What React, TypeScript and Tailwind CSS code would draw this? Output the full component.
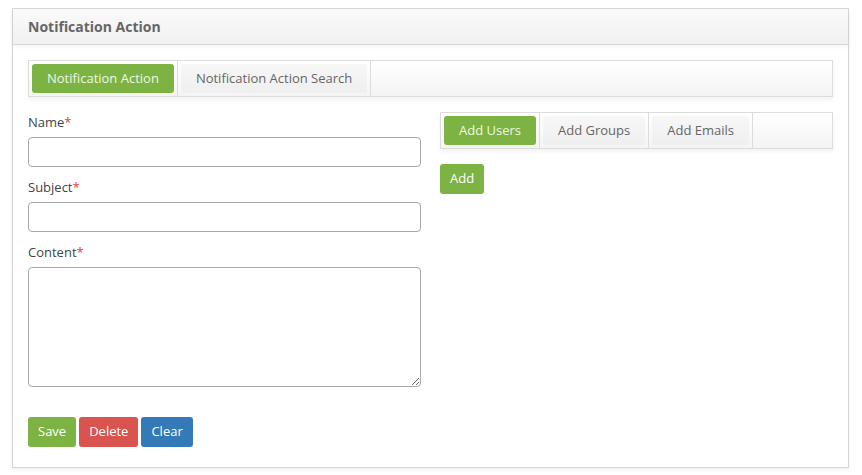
import { useState } from 'react'

const FONT = { fontFamily: '"Open Sans", "Noto Sans", sans-serif' }

function Tabs({ items, active, onPick }: { items: string[]; active: number; onPick: (i: number) => void }) {
  return (
    <div className="flex h-[37px] border border-[#dcdcdc] bg-gradient-to-b from-white to-[#f4f4f4] shadow-[0_3px_4px_rgba(0,0,0,0.05)]">
      {items.map((t, i) => (
        <div key={t} className="border-r border-[#dcdcdc] p-[3px]">
          <button
            onClick={() => onPick(i)}
            className={`h-[29px] rounded-[3px] px-[15px] text-[13px] leading-[29px] ${
              i === active
                ? 'bg-[#7cb342] text-[#eef7e6]'
                : 'bg-gradient-to-b from-[#f7f7f7] to-[#efefef] text-[#666]'
            }`}
          >
            {t}
          </button>
        </div>
      ))}
    </div>
  )
}

function Field({ label, area }: { label: string; area?: boolean }) {
  return (
    <div className="flex flex-col">
      <label className="h-[20px] text-[13px] leading-[20px] text-[#444]">
        {label}
        <span className="text-[#e53935]">*</span>
      </label>
      {area ? (
        <textarea className="mt-[5px] h-[120px] w-full rounded-[4px] border border-[#a3a8aa] bg-white" />
      ) : (
        <input className="mt-[5px] h-[30px] w-full rounded-[4px] border border-[#a3a8aa] bg-white" />
      )}
    </div>
  )
}

export default function App() {
  const [tab, setTab] = useState(0)
  const [sub, setSub] = useState(0)

  return (
    <div className="min-h-screen bg-white pl-[12px] pr-[13px] pt-[8px]" style={FONT}>
      <div className="border border-[#d6d6d6] bg-white shadow-[0_2px_4px_rgba(0,0,0,0.06)]">
        {/* header */}
        <div className="flex h-[36px] items-center border-b border-[#d6d6d6] bg-gradient-to-b from-[#fafafa] to-[#f1f1f1] px-[15px] shadow-[0_2px_4px_rgba(0,0,0,0.04)]">
          <h2 className="text-[14px] font-bold text-[#666]">Notification Action</h2>
        </div>

        <div className="px-[15px] pb-[20px] pt-[15px]">
          <Tabs items={['Notification Action', 'Notification Action Search']} active={tab} onPick={setTab} />

          <div className="mt-[15px] grid grid-cols-2 gap-x-[19px]">
            {/* left form */}
            <div className="flex flex-col gap-[10px]">
              <Field label="Name" />
              <Field label="Subject" />
              <Field label="Content" area />
              <div className="mt-[20px] flex gap-[3px]">
                <button className="h-[30px] rounded-[3px] bg-[#7cb342] px-[10px] text-[13px] text-white">Save</button>
                <button className="h-[30px] rounded-[3px] bg-[#d9534f] px-[10px] text-[13px] text-white">Delete</button>
                <button className="h-[30px] rounded-[3px] bg-[#337ab7] px-[10px] text-[13px] text-white">Clear</button>
              </div>
            </div>

            {/* right recipients */}
            <div className="flex flex-col items-start">
              <div className="w-full">
                <Tabs items={['Add Users', 'Add Groups', 'Add Emails']} active={sub} onPick={setSub} />
              </div>
              <button className="mt-[15px] h-[30px] rounded-[3px] bg-[#7cb342] px-[10px] text-[13px] text-white">Add</button>
            </div>
          </div>
        </div>
      </div>
    </div>
  )
}
